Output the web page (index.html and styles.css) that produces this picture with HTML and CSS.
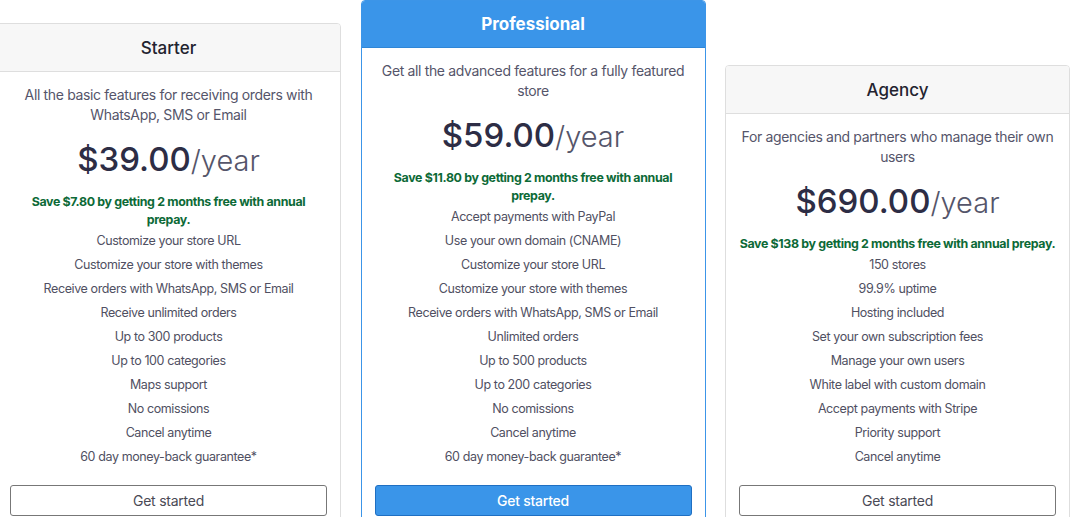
FILE: index.html
```html
<!DOCTYPE html>
<html lang="en">
<head>
<meta charset="utf-8">
<title>Pricing</title>
<link rel="stylesheet" href="styles.css">
</head>
<body>
<div class="deck">
  <div class="card">
    <div class="card-header"><h4 class="plan-name">Starter</h4></div>
    <div class="card-body">
      <p class="desc">All the basic features for receiving orders with WhatsApp, SMS or Email</p>
      <div class="price">$39.00<span class="per">/year</span></div>
      <p class="save">Save $7.80 by getting 2 months free with annual prepay.</p>
      <ul class="features">
        <li>Customize your store URL</li>
        <li>Customize your store with themes</li>
        <li>Receive orders with WhatsApp, SMS or Email</li>
        <li>Receive unlimited orders</li>
        <li>Up to 300 products</li>
        <li>Up to 100 categories</li>
        <li>Maps support</li>
        <li>No comissions</li>
        <li>Cancel anytime</li>
        <li>60 day money-back guarantee*</li>
      </ul>
      <button class="btn btn-outline" type="button">Get started</button>
    </div>
  </div>
  <div class="card card-featured">
    <div class="card-header"><h4 class="plan-name">Professional</h4></div>
    <div class="card-body">
      <p class="desc">Get all the advanced features for a fully featured store</p>
      <div class="price">$59.00<span class="per">/year</span></div>
      <p class="save">Save $11.80 by getting 2 months free with annual prepay.</p>
      <ul class="features">
        <li>Accept payments with PayPal</li>
        <li>Use your own domain (CNAME)</li>
        <li>Customize your store URL</li>
        <li>Customize your store with themes</li>
        <li>Receive orders with WhatsApp, SMS or Email</li>
        <li>Unlimited orders</li>
        <li>Up to 500 products</li>
        <li>Up to 200 categories</li>
        <li>No comissions</li>
        <li>Cancel anytime</li>
        <li>60 day money-back guarantee*</li>
      </ul>
      <button class="btn btn-primary" type="button">Get started</button>
    </div>
  </div>
  <div class="card">
    <div class="card-header"><h4 class="plan-name">Agency</h4></div>
    <div class="card-body">
      <p class="desc">For agencies and partners who manage their own users</p>
      <div class="price">$690.00<span class="per">/year</span></div>
      <p class="save">Save $138 by getting 2 months free with annual prepay.</p>
      <ul class="features">
        <li>150 stores</li>
        <li>99.9% uptime</li>
        <li>Hosting included</li>
        <li>Set your own subscription fees</li>
        <li>Manage your own users</li>
        <li>White label with custom domain</li>
        <li>Accept payments with Stripe</li>
        <li>Priority support</li>
        <li>Cancel anytime</li>
      </ul>
      <button class="btn btn-outline" type="button">Get started</button>
    </div>
  </div>
</div>
</body>
</html>
```
FILE: styles.css
```css
html {
  overflow: hidden;
}
body {
  margin: 0;
  background: #ffffff;
  font-family: Inter, "Noto Sans", "Liberation Sans", sans-serif;
  color: #4a4a5a;
}
.deck {
  display: grid;
  grid-template-columns: 345px 345px 345px;
  column-gap: 19.5px;
  align-items: end;
  margin: 0 0 0 -4px;
}
.card {
  border: 1px solid #dedede;
  border-radius: 4px;
  background: #fff;
  display: flex;
  flex-direction: column;
  text-align: center;
}
.card-header {
  background: #f7f7f7;
  border-bottom: 1px solid #dedede;
  padding: 13px 13px 11px;
  border-radius: 3px 3px 0 0;
}
.plan-name {
  margin: 0;
  font-size: 17px;
  line-height: 23px;
  font-weight: 500;
  color: #23232f;
}
.card-featured {
  border-color: #3c95e8;
}
.card-featured .card-header {
  background: #3a95e9;
  border-bottom-color: #2f86d6;
  padding: 12px 13px 11px;
}
.card-featured .plan-name {
  color: #ffffff;
  font-weight: 700;
}
.card-body {
  padding: 13px 13px 13px;
  display: flex;
  flex-direction: column;
}
.desc {
  margin: 0 0 15px;
  font-size: 14px;
  line-height: 20px;
  letter-spacing: -0.35px;
  color: #55556a;
}
.price {
  font-size: 33px;
  line-height: 38px;
  font-weight: 500;
  color: #2d2d45;
}
.per {
  font-weight: 300;
  font-size: 29px;
  color: #55556a;
}
.save {
  margin: 13px 0 0;
  font-size: 12.4px;
  line-height: 17.5px;
  letter-spacing: -0.35px;
  font-weight: 700;
  color: #0d6a37;
}
.features {
  list-style: none;
  margin: 1px 0 0;
  padding: 0;
}
.features li {
  font-size: 12.5px;
  line-height: 24px;
  letter-spacing: -0.4px;
  color: #505062;
}
.btn {
  margin-top: 16px;
  height: 31px;
  border-radius: 3px;
  font-family: inherit;
  font-size: 14px;
  letter-spacing: -0.25px;
  cursor: pointer;
}
.btn-outline {
  background: #fff;
  border: 1px solid #777;
  color: #4a4a55;
}
.btn-primary {
  background: #3a95e9;
  border: 1px solid #1f6fc2;
  color: #fff;
  font-weight: 500;
}
```
